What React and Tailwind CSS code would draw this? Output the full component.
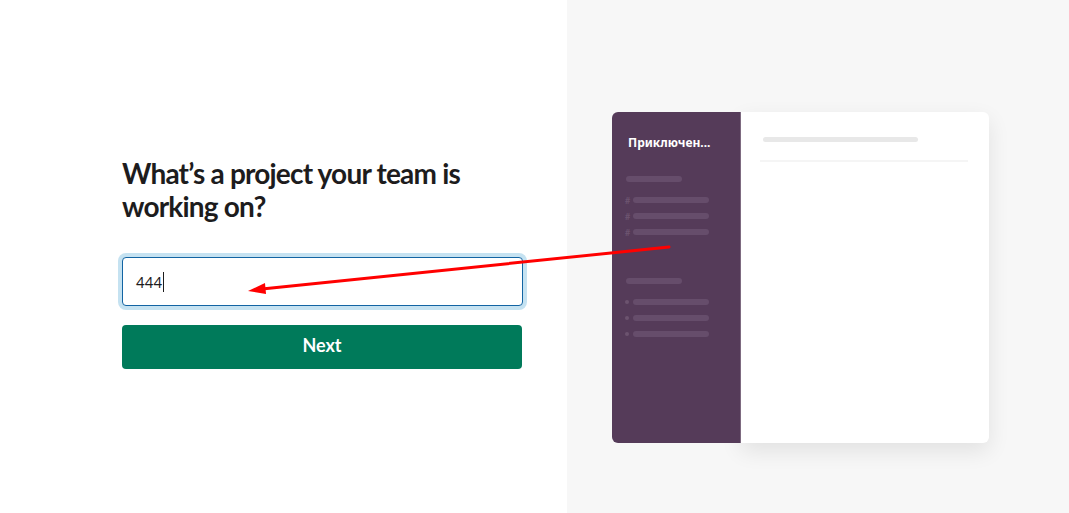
import React from "react";

function SidebarGroup({ marker }) {
  return (
    <div className="flex flex-col">
      <div className="ml-[14px] h-[6px] w-[56px] rounded-full bg-[#664d6b]" />
      <div className="mt-[15px] flex flex-col gap-[10px]">
        {[0, 1, 2].map((i) => (
          <div key={i} className="flex h-[6px] items-center">
            {marker === "hash" ? (
              <span className="ml-[13px] w-[8px] text-[9px] font-bold leading-none text-[#6c536f]">#</span>
            ) : (
              <span className="ml-[13px] mr-[4px] h-[4px] w-[4px] rounded-full bg-[#6c536f]" />
            )}
            <div className="h-[6px] w-[76px] rounded-full bg-[#664d6b]" />
          </div>
        ))}
      </div>
    </div>
  );
}

function PreviewCard() {
  return (
    <div className="flex h-[331px] w-[377px]">
      <div className="relative z-10 flex w-[129px] flex-col rounded-l-[6px] border-r border-[#7d6a80] bg-[#553b59] pt-[23px]">
        <div
          className="ml-[16px] text-[12px] font-bold leading-[16px] text-white"
          style={{ fontFamily: '"Noto Sans", "Open Sans", sans-serif' }}
        >
          Приключен...
        </div>
        <div className="mt-[25px]">
          <SidebarGroup marker="hash" />
        </div>
        <div className="mt-[43px]">
          <SidebarGroup marker="dot" />
        </div>
      </div>
      <div className="flex flex-1 flex-col rounded-r-[6px] bg-white pl-[19px] pr-[21px] pt-[25px] shadow-[0_8px_22px_rgba(0,0,0,0.09)]">
        <div className="ml-[3px] h-[5px] w-[155px] rounded-full bg-[#e8e8e8]" />
        <div className="mt-[18px] h-[2px] w-full bg-[#f5f5f5]" />
      </div>
    </div>
  );
}

export default function App() {
  return (
    <div
      className="relative flex h-[513px] w-full overflow-hidden bg-white"
      style={{ fontFamily: 'Lato, "Liberation Sans", sans-serif' }}
    >
      <div className="w-[567px] shrink-0 pl-[122px] pt-[157px]">
        <h1 className="w-[400px] text-[28px] font-bold leading-[33px] tracking-[-0.8px] text-[#1d1c1d]">
          What’s a project your team is working on?
        </h1>
        <div className="mt-[34px] flex h-[49px] w-[401px] items-center rounded-[4px] border border-[#1264a3] bg-white pl-[13px] shadow-[0_0_0_4px_#c5e2f1]">
          <span className="text-[15px] leading-[20px] text-[#1d1c1d]">444</span>
          <span className="ml-[1px] h-[20px] w-[1px] bg-[#1d1c1d]" />
        </div>
        <button className="mt-[19px] flex h-[44px] w-[400px] items-center justify-center rounded-[4px] bg-[#007a5a] pb-[3px] text-[18px] font-bold text-white">
          Next
        </button>
      </div>

      <div className="flex-1 bg-[#f7f7f7] pl-[45px] pt-[112px]">
        <PreviewCard />
      </div>

      {/* annotation arrow */}
      <svg
        className="pointer-events-none absolute left-0 top-0 z-20"
        width="1069"
        height="513"
        viewBox="0 0 1069 513"
      >
        <line x1="669" y1="247" x2="262" y2="289" stroke="#ff0000" strokeWidth="3" strokeLinecap="round" />
        <polygon points="248,291 265,283 266,294" fill="#ff0000" />
      </svg>
    </div>
  );
}
